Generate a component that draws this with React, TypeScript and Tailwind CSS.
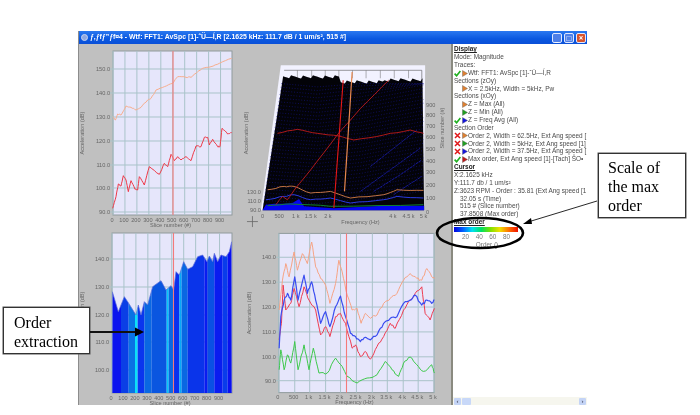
import type { ReactNode } from "react";

type Pt = [number, number];

const GRID = "#a9c3c9";

// points were read off a 3x zoom, so convert them back to cell coords
const toCell = (pts: Pt[], zx: number, zy: number, cx: number, cy: number, noise = 0): Pt[] => {
  let seed = pts.length * 7 + 3;
  const rnd = () => {
    seed = (seed * 9301 + 49297) % 233280;
    return seed / 233280 - 0.5;
  };
  const out: Pt[] = [];
  pts.forEach((p, i) => {
    const x = p[0] / 3 + zx - cx;
    const y = p[1] / 3 + zy - cy;
    out.push([x, y]);
    if (noise > 0 && i < pts.length - 1) {
      const nx = pts[i + 1][0] / 3 + zx - cx;
      const ny = pts[i + 1][1] / 3 + zy - cy;
      for (let k = 1; k < 4; k++) {
        out.push([x + ((nx - x) * k) / 4, y + ((ny - y) * k) / 4 + rnd() * noise]);
      }
    }
  });
  return out;
};

const str = (pts: Pt[]) => pts.map((p) => p.join(",")).join(" ");

function Trace({ pts, color, width = 1 }: { pts: Pt[]; color: string; width?: number }) {
  return <polyline points={str(pts)} fill="none" stroke={color} strokeWidth={width} strokeLinejoin="round" />;
}

function Tick({ x, y, label, anchor = "middle" }: { x: number; y: number; label: string; anchor?: "middle" | "end" | "start" }) {
  return (
    <text x={x} y={y} fontSize={5.6} fill="#666" textAnchor={anchor} fontFamily="'Liberation Sans', sans-serif">
      {label}
    </text>
  );
}

function Plot({
  x0,
  y0,
  w,
  h,
  xTicks,
  yTicks,
  cursor,
  xTitle,
  yTitleX,
  children,
}: {
  x0: number;
  y0: number;
  w: number;
  h: number;
  xTicks: [number, string][];
  yTicks: [number, string][];
  cursor: number;
  xTitle: string;
  yTitleX: number;
  children?: ReactNode;
}) {
  const y1 = y0 + h;
  return (
    <>
      <rect x={x0} y={y0} width={w} height={h} fill="#e6e6fb" stroke="#8f9a9c" strokeWidth={1} />
      {xTicks.map(([x]) => (
        <line key={x} x1={x} x2={x} y1={y0} y2={y1} stroke={GRID} strokeWidth={1} />
      ))}
      {yTicks.map(([y]) => (
        <line key={y} x1={x0 - 3} x2={x0 + w} y1={y} y2={y} stroke={GRID} strokeWidth={1} />
      ))}
      {children}
      <line x1={cursor} x2={cursor} y1={y0} y2={y1} stroke="#f47a7a" strokeWidth={1.1} />
      {xTicks.map(([x, t]) => (
        <Tick key={t} x={x - 1} y={y1 + 6.5} label={t} />
      ))}
      {yTicks.map(([y, t]) => (
        <Tick key={t} x={x0 - 3} y={y + 2} label={t} anchor="end" />
      ))}
      <Tick x={x0 + w / 2 - 2} y={y1 + 11.5} label={xTitle} />
      <text
        x={yTitleX}
        y={y0 + h / 2}
        fontSize={5.6}
        fill="#666"
        textAnchor="middle"
        fontFamily="'Liberation Sans', sans-serif"
        transform={`rotate(-90 ${yTitleX} ${y0 + h / 2})`}
      >
        Acceleration (dB)
      </text>
    </>
  );
}

const sliceTicks = (x0: number): [number, string][] =>
  [0, 100, 200, 300, 400, 500, 600, 700, 800, 900].map((v, i) => [x0 + i * 11.95, String(v)]);

function TopLeftChart() {
  const orange = toCell(
    [[125,290],[133,300],[140,282],[150,285],[165,258],[180,262],[195,270],[210,262],[230,240],[240,235],[255,210],[280,200],[305,190],[320,170],[345,172],[360,172],[380,155],[395,145],[420,140],[445,130],[482,115]],
    70, 20, 78, 44, 1,
  );
  const red = toCell(
    [[125,565],[135,530],[142,492],[150,498],[157,467],[165,480],[172,515],[180,482],[192,508],[200,510],[205,470],[220,495],[235,440],[265,463],[280,430],[290,440],[300,403],[310,422],[320,410],[330,420],[345,410],[360,422],[375,378],[390,380],[400,352],[410,352],[415,375],[425,358],[440,380],[447,380],[453,325],[470,342],[482,338]],
    70, 20, 78, 44, 1.2,
  );
  return (
    <svg viewBox="0 0 162 181" className="w-full h-full overflow-visible">
      <Plot
        x0={34}
        y0={7}
        w={119}
        h={164}
        xTicks={sliceTicks(34)}
        yTicks={[[25, "150.0"], [49, "140.0"], [73, "130.0"], [97, "120.0"], [121, "110.0"], [144, "100.0"], [168, "90.0"]]}
        cursor={94}
        xTitle="Slice number (#)"
        yTitleX={5}
      >
        <Trace pts={orange} color="#f7ae8e" />
        <Trace pts={red} color="#ee3a48" />
      </Plot>
    </svg>
  );
}

function BottomLeftChart() {
  const env = toCell(
    [[334,215],[352,275],[370,230],[380,245],[405,285],[412,255],[420,285],[430,245],[440,255],[455,200],[480,182],[495,210],[510,197],[518,210],[525,155],[535,165],[548,125],[560,148],[575,140],[590,110],[605,105],[618,125],[625,108],[635,125],[640,100],[650,125],[660,105],[675,110],[685,95],[692,65]],
    0, 220, 78, 225,
  );
  const stripes: [number, number, string][] = [
    [334, 360, "#0a14ee"], [360, 383, "#0b3fe6"], [383, 402, "#0a72e4"], [402, 410, "#0ae0f8"], [410, 430, "#0a36ee"],
    [430, 452, "#0a68e2"], [452, 497, "#0a56e0"], [497, 503, "#08c4fa"], [503, 518, "#0a68e2"], [518, 535, "#0a30ee"],
    [535, 542, "#08a8f8"], [542, 560, "#0a68e2"], [560, 610, "#0a34ea"], [610, 620, "#0a1cf0"], [620, 640, "#0a50e4"],
    [640, 665, "#0a1cf0"], [665, 680, "#0a3cea"], [680, 692, "#0a10f0"],
  ];
  const base = 168;
  return (
    <svg viewBox="0 0 162 180" className="w-full h-full overflow-visible">
      <clipPath id="bars">
        <polygon points={`33,${base} ${str(env)} 153,${base}`} />
      </clipPath>
      <Plot
        x0={33}
        y0={8}
        w={120}
        h={160}
        xTicks={sliceTicks(33)}
        yTicks={[[34, "140.0"], [62, "130.0"], [90, "120.0"], [117, "110.0"], [145, "100.0"]]}
        cursor={94.5}
        xTitle="Slice number (#)"
        yTitleX={5}
      >
        <g clipPath="url(#bars)">
          {stripes.map(([a, b, c]) => (
            <rect key={a} x={a / 3 - 78} y={0} width={(b - a) / 3} height={base} fill={c} />
          ))}
        </g>
        <Trace pts={env} color="#5a6ad8" width={0.7} />
      </Plot>
    </svg>
  );
}

function BottomRightChart() {
  const cv = (pts: Pt[]) => toCell(pts, 240, 220, 240, 225, 2.4);
  const orange = cv([[115,270],[125,180],[135,130],[145,170],[160,95],[170,150],[185,100],[200,130],[213,65],[225,140],[240,175],[255,195],[268,250],[285,190],[295,120],[305,155],[320,225],[335,270],[350,265],[362,310],[375,280],[390,295],[410,285],[430,250],[450,235],[470,220],[490,180],[510,160],[530,175],[545,180],[560,145],[575,170],[583,175]]);
  const blue = cv([[115,385],[120,290],[130,240],[140,220],[150,240],[162,170],[172,240],[190,165],[200,220],[213,185],[225,240],[240,310],[255,275],[268,320],[285,260],[300,228],[315,290],[330,340],[345,350],[360,365],[375,352],[390,360],[410,345],[430,310],[450,295],[470,290],[490,250],[510,240],[525,225],[545,255],[560,240],[575,250],[583,240]]);
  const red = cv([[115,360],[122,310],[127,195],[135,270],[150,250],[160,205],[175,260],[190,200],[205,240],[225,270],[240,345],[255,320],[268,350],[285,290],[300,280],[315,310],[335,385],[345,375],[360,410],[375,395],[390,418],[410,380],[430,350],[450,310],[465,325],[490,270],[510,240],[525,220],[545,200],[555,280],[570,300],[583,265]]);
  const green = cv([[115,450],[120,390],[130,450],[140,405],[150,430],[162,365],[172,450],[190,375],[205,450],[218,385],[235,460],[260,460],[285,415],[305,440],[320,470],[350,490],[380,475],[410,465],[435,425],[455,450],[475,470],[490,430],[510,412],[530,435],[550,455],[575,435],[583,460]]);
  return (
    <svg viewBox="0 0 211 180" className="w-full h-full overflow-visible">
      <Plot
        x0={38}
        y0={8}
        w={156}
        h={160}
        xTicks={[[38,"0"],[54,"500"],[69,"1 k"],[85,"1.5 k"],[100,"2 k"],[116,"2.5 k"],[132,"3 k"],[147,"3.5 k"],[163,"4 k"],[178,"4.5 k"],[194,"5 k"]]}
        yTicks={[[32,"140.0"],[57,"130.0"],[82,"120.0"],[107,"110.0"],[132,"100.0"],[156,"90.0"]]}
        cursor={106}
        xTitle="Frequency (Hz)"
        yTitleX={10}
      >
        <Trace pts={orange} color="#f6a283" />
        <Trace pts={green} color="#3cc84a" />
        <Trace pts={red} color="#ee3a50" />
        <Trace pts={blue} color="#3a4cf0" width={1.2} />
      </Plot>
    </svg>
  );
}

function WaterfallChart() {
  const cv = (pts: Pt[], n = 0) => toCell(pts, 250, 20, 240, 44, n);
  const jag: Pt[] = [];
  for (let x = 97; x <= 520; x += 6) {
    const wob = (x * 37) % 11;
    jag.push([x, (x < 270 ? 165 : 180) + wob - (x > 400 ? 6 : 0)]);
  }
  const body = cv([[35, 572], ...jag, [522, 572]]);
  // dark speckle over the black surface, one dashed row per slice
  const rows: string[] = [];
  for (let r = 0; r < 34; r++) {
    const y = 190 + r * 11;
    const l = 95 - ((y - 165) / 400) * 60;
    rows.push(str(cv([[l, y], [200, y + 10], [330, y - 4], [520, y - 40]].map(([a, b]) => [a, Math.max(b, 190)] as Pt))));
  }
  const ridges: Pt[][] = [
    [[330,515],[420,450],[510,385]],
    [[370,515],[450,465],[515,420]],
    [[430,525],[475,495],[515,470]],
    [[360,440],[430,385],[500,330]],
  ];
  return (
    <svg viewBox="0 0 211 181" className="w-full h-full overflow-visible">
      <polygon points={str(cv([[90,135],[525,135],[525,150],[522,572],[30,572]]))} fill="#f2f2ff" />
      <polyline points={str(cv([[100,150],[515,150],[515,180]]))} fill="none" stroke="#555" strokeWidth={0.6} />
      {[140, 183, 224, 265, 306, 347, 390, 432, 475].map((x) => (
        <line key={x} x1={x / 3 + 10} x2={x / 3 + 10} y1={26} y2={34} stroke="#666" strokeWidth={0.5} />
      ))}
      <polygon points={str(body)} fill="#030308" />
      {rows.map((p, i) => (
        <polyline key={i} points={p} fill="none" stroke="#14148c" strokeWidth={0.6} strokeDasharray="1 1.8" />
      ))}
      {ridges.map((l, i) => (
        <polyline key={i} points={str(cv(l))} fill="none" stroke="#161a9c" strokeWidth={0.9} strokeDasharray="3 0.6" />
      ))}
      <polygon points={str(cv([[35,572],[45,555],[70,552],[100,552],[125,550],[145,538],[160,560],[250,566],[400,558],[522,558],[522,572]]))} fill="#0505f0" />
      <Trace pts={cv([[45,540],[100,530],[130,525],[180,540],[240,535],[300,550],[400,540],[440,530],[520,535]], 1)} color="#2a3ae0" />
      <Trace pts={cv([[50,510],[100,500],[130,500],[180,520],[240,515],[300,535],[400,525],[440,510],[520,512]], 1)} color="#d88048" width={0.9} />
      <Trace pts={cv([[50,558],[120,553],[240,560],[520,555]], 1)} color="#108030" />
      <Trace pts={cv([[80,340],[140,328],[200,340],[265,348],[310,360],[400,345],[480,330],[520,340]], 1)} color="#c01c1c" width={0.9} />
      <Trace pts={cv([[75,555],[95,530],[110,540],[135,505],[180,450],[260,345],[330,265],[415,180]], 0.6)} color="#c01c1c" width={0.9} />
      <Trace pts={cv([[278,180],[250,565]])} color="#e81818" width={1.1} />
      <Trace pts={cv([[305,155],[282,515]])} color="#e88850" width={1.2} />
      {[[255,"900"],[285,"800"],[318,"700"],[352,"600"],[387,"500"],[422,"400"],[458,"300"],[497,"200"],[535,"100"],[578,"0"]].map(([y, t]) => (
        <Tick key={t as string} x={186} y={(y as number) / 3 - 24 + 2} label={t as string} anchor="start" />
      ))}
      {[[35,"0"],[85,"500"],[135,"1 k"],[180,"1.5 k"],[232,"2 k"],[428,"4 k"],[475,"4.5 k"],[520,"5 k"]].map(([x, t]) => (
        <Tick key={t as string} x={(x as number) / 3 + 10} y={174} label={t as string} />
      ))}
      {[[518,"130.0"],[545,"110.0"],[570,"90.0"]].map(([y, t]) => (
        <Tick key={t as string} x={20} y={(y as number) / 3 - 24 + 2} label={t as string} anchor="end" />
      ))}
      <Tick x={120} y={180} label="Frequency (Hz)" />
      <text x={7} y={89} fontSize={5.6} fill="#666" textAnchor="middle" fontFamily="'Liberation Sans', sans-serif" transform="rotate(-90 7 89)">
        Acceleration (dB)
      </text>
      <text x={204} y={84} fontSize={5.6} fill="#666" textAnchor="middle" fontFamily="'Liberation Sans', sans-serif" transform="rotate(-90 204 84)">
        Slice number (#)
      </text>
      <path d="M6 178h11M11.5 172.5v11" stroke="#666" strokeWidth={0.8} fill="none" />
    </svg>
  );
}

function Check() {
  return (
    <svg viewBox="0 0 7 7" className="w-[7px] h-[7px] shrink-0">
      <path d="M0.6 3.6 L2.6 5.8 L6.4 1" fill="none" stroke="#1fb01f" strokeWidth={1.6} />
    </svg>
  );
}

function Cross() {
  return (
    <svg viewBox="0 0 7 7" className="w-[7px] h-[7px] shrink-0">
      <path d="M1 1 L6 6 M6 1 L1 6" fill="none" stroke="#e01818" strokeWidth={1.5} />
    </svg>
  );
}

function Tri({ color }: { color: string }) {
  return (
    <svg viewBox="0 0 6 7" className="w-[6px] h-[7px] shrink-0">
      <path d="M0.5 0.5 L5.5 3.5 L0.5 6.5 Z" fill={color} stroke="#555" strokeWidth={0.4} />
    </svg>
  );
}

type Row = { text: string; head?: boolean; mark?: "check" | "cross" | "none"; tri?: string; pad?: string };

const ROWS: Row[] = [
  { text: "Display", head: true },
  { text: "Mode: Magnitude" },
  { text: "Traces:" },
  { text: "Wtf: FFT1: AvSpc [1]-\u02c6\u00dc\u2014\u00cd,R", mark: "check", tri: "#e08030" },
  { text: "Sections (zOy)" },
  { text: "X = 2.5kHz, Width = 5kHz, Pw", mark: "none", tri: "#e08030" },
  { text: "Sections (xOy)" },
  { text: "Z = Max (All)", mark: "none", tri: "#e08030" },
  { text: "Z = Min (All)", mark: "none", tri: "#20a020" },
  { text: "Z = Freq Avg (All)", mark: "check", tri: "#1414e0" },
  { text: "Section Order" },
  { text: "Order 2, Width = 62.5Hz, Ext Ang speed [", mark: "cross", tri: "#e08030" },
  { text: "Order 2, Width = 5kHz, Ext Ang speed [1]", mark: "cross", tri: "#20a020" },
  { text: "Order 2, Width = 37.5Hz, Ext Ang speed [", mark: "cross", tri: "#1414e0" },
  { text: "Max order, Ext Ang speed [1]-[Tach] \u0160O\u2022", mark: "check", tri: "#c01818" },
  { text: "Cursor", head: true },
  { text: "X:2.1625 kHz" },
  { text: "Y:111.7 db / 1 um/s\u00b2" },
  { text: "Z:3623 RPM - Order : 35.81  (Ext Ang speed [1" },
  { text: "32.05 s (Time)", pad: "pl-[7px]" },
  { text: "515 # (Slice number)", pad: "pl-[7px]" },
  { text: "37.8508 (Max order)", pad: "pl-[7px]" },
  { text: "Max order", head: true },
];

function InfoPanel() {
  return (
    <div className="w-[136px] h-full bg-white border-l-2 border-[#8a8a80] relative overflow-hidden pt-[1.5px] font-['Liberation_Sans',sans-serif] text-[6.45px] text-[#4a4a4a]">
      {ROWS.map((r) => (
        <div key={r.text} className={`h-[7.87px] flex items-center whitespace-nowrap pl-[1px] leading-none ${r.pad ?? ""} ${r.head ? "font-bold underline text-[#222]" : ""}`}>
          {r.mark === "check" && <Check />}
          {r.mark === "cross" && <Cross />}
          {r.mark === "none" && <span className="w-[7px] shrink-0" />}
          {r.tri && <span className="ml-[1px]"><Tri color={r.tri} /></span>}
          <span>{r.text}</span>
        </div>
      ))}
      <div className="ml-[1px] mt-[1px] w-[64px] h-[5px] bg-[linear-gradient(to_right,#0000e0,#0060ff,#00e0f0,#00e060,#80e000,#f0e000,#ff7000,#f01000)]" />
      <div className="ml-[1px] w-[64px] mt-[2px] px-[8px] flex justify-between text-[#777] leading-none text-[6.4px]">
        <span>20</span>
        <span>40</span>
        <span>60</span>
        <span>80</span>
      </div>
      <div className="w-[64px] ml-[1px] text-center text-[#777] leading-none text-[6.4px] mt-[1px] pl-[2px]">Order ()</div>
      <div className="absolute bottom-0 left-0 right-0 h-[8px] bg-[#f6f6ee] flex items-center justify-between pl-[1px] pr-[1px]">
        <div className="flex gap-[1px]">
          <span className="w-[7px] h-[7px] rounded-[1px] bg-[#c4d4f6] text-[#334] text-[6px] leading-[7px] text-center">‹</span>
          <span className="w-[9px] h-[7px] rounded-[1px] bg-[#c8d8f8]" />
        </div>
        <span className="w-[7px] h-[7px] rounded-[1px] bg-[#c4d4f6] text-[#334] text-[6px] leading-[7px] text-center">›</span>
      </div>
    </div>
  );
}

function TitleButton({ red, children }: { red?: boolean; children: ReactNode }) {
  return (
    <div className={`w-[10px] h-[10px] rounded-[2px] border border-[#dfe8ff] flex items-center justify-center text-white text-[8px] leading-none font-bold ${red ? "bg-[#d8532c]" : "bg-[#4f80e8]"}`}>
      {children}
    </div>
  );
}

function Callout({ className, children }: { className: string; children: ReactNode }) {
  return (
    <div className={`absolute bg-white border border-[#333] font-['Liberation_Serif',serif] text-[16px] leading-[19px] text-black shadow-[0_0_0_0.5px_#555] ${className}`}>
      {children}
    </div>
  );
}

export default function App() {
  return (
    <div className="relative w-[700px] h-[415px] bg-white overflow-hidden pt-[31px] pl-[78px] blur-[0.35px]">
      <div className="w-[509px] h-[374px] flex flex-col bg-[#c0c0c0] border-l border-[#8c8c8c]">
        <div className="h-[13px] shrink-0 flex items-center bg-[linear-gradient(to_bottom,#2a78f0,#0a58e0_60%,#0a50d8)] pl-[2px] pr-[1px] gap-[2px]">
          <div className="w-[7px] h-[7px] rounded-full bg-[#8fa8e0] border border-[#c8d4f0] shrink-0" />
          <span className="text-white font-bold text-[6.9px] whitespace-nowrap font-['Liberation_Sans',sans-serif] flex-1 overflow-hidden">
            {"\u0192\u201a\u0192f\u0192\u201d\u0192f\u00a44 - Wtf: FFT1: AvSpc [1]-\u02c6\u00dc\u2014\u00cd,R [2.1625 kHz: 111.7 dB / 1 um/s\u00b2, 515 #]"}
          </span>
          <TitleButton>_</TitleButton>
          <TitleButton>□</TitleButton>
          <TitleButton red>×</TitleButton>
        </div>
        <div className="flex-1 flex min-h-0">
          <div className="w-[372px] grid grid-cols-[162px_210px] grid-rows-[181px_180px]">
            <TopLeftChart />
            <WaterfallChart />
            <BottomLeftChart />
            <BottomRightChart />
          </div>
          <InfoPanel />
        </div>
      </div>

      <Callout className="left-[598px] top-[153px] w-[88px] h-[65px] pl-[9px] pt-[4px]">
        Scale of
        <br />
        the max
        <br />
        order
      </Callout>
      <Callout className="left-[3px] top-[307px] w-[87px] h-[47px] pl-[10px] pt-[5px]">
        Order
        <br />
        extraction
      </Callout>

      {/* hand drawn annotations sitting on top of the screenshot */}
      <svg viewBox="0 0 700 415" className="absolute inset-0 w-[700px] h-[415px] pointer-events-none">
        <ellipse cx={480} cy={233} rx={43} ry={15} fill="none" stroke="#000" strokeWidth={2.6} />
        <line x1={597} y1={201} x2={528} y2={222} stroke="#111" strokeWidth={0.9} />
        <path d="M523 224 L531 218 L532 224 Z" fill="#000" />
        <line x1={90} y1={332} x2={137} y2={332} stroke="#111" strokeWidth={1.8} />
        <path d="M144 332 L135 327.5 L135 336.5 Z" fill="#000" />
      </svg>
    </div>
  );
}
